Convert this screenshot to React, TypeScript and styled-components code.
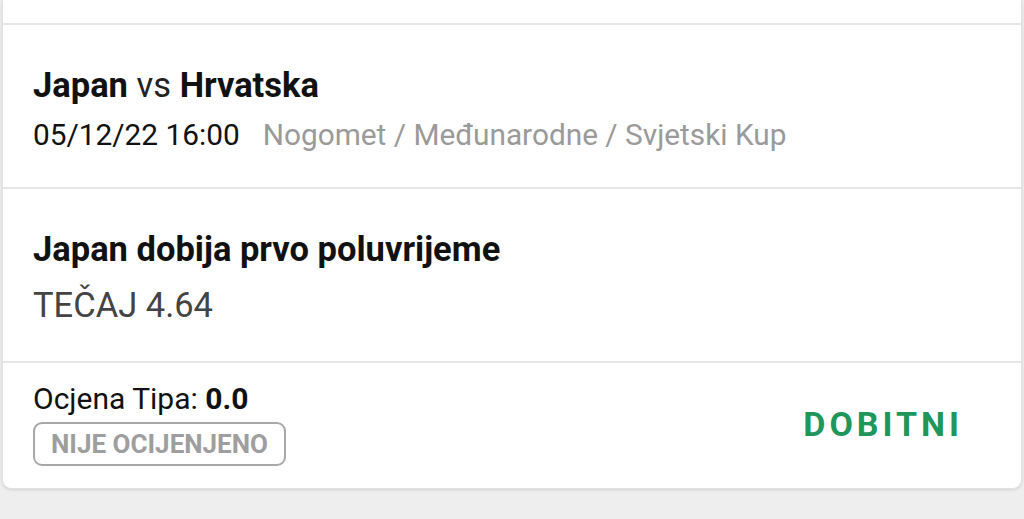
import React from "react";
import styled, { createGlobalStyle } from "styled-components";

const Global = createGlobalStyle`
  html, body { margin: 0; padding: 0; background: #eeeeee; }
  body { font-family: Roboto, "Noto Sans", sans-serif; width: 1024px; height: 519px; overflow: hidden; }
`;

const Page = styled.div`
  padding: 0 2px 0 2px;
`;

const Card = styled.div`
  background: #ffffff;
  border: 1px solid #e2e2e2;
  border-top: none;
  border-radius: 0 0 9px 9px;
  box-shadow: 0 1px 3px rgba(0, 0, 0, 0.12);
  display: flex;
  flex-direction: column;
`;

const Section = styled.div<{ $h: number; $pt?: number }>`
  height: ${(p) => p.$h}px;
  box-sizing: border-box;
  padding: ${(p) => p.$pt ?? 0}px 30px 0 30px;
  border-bottom: 2px solid #e6e6e6;
  display: flex;
  flex-direction: column;
`;

const Footer = styled.div`
  height: 125px;
  box-sizing: border-box;
  padding: 18px 58px 0 30px;
  display: flex;
  justify-content: space-between;
  align-items: flex-start;
`;

const Title = styled.div`
  font-size: 34.5px;
  line-height: 40px;
  color: #111;
  font-weight: 700;
  white-space: nowrap;
`;

const Light = styled.span`
  font-weight: 400;
  color: #222;
`;

const Meta = styled.div`
  margin-top: 12px;
  font-size: 29.8px;
  line-height: 36px;
  color: #111;
  display: flex;
  gap: 23px;
  white-space: nowrap;
`;

const Path = styled.span`
  color: #9a9a9a;
`;

const Odds = styled.div`
  margin-top: 16px;
  font-size: 34.5px;
  line-height: 40px;
  color: #444;
`;

const RatingCol = styled.div`
  display: flex;
  flex-direction: column;
  align-items: flex-start;
`;

const Rating = styled.div`
  font-size: 30px;
  line-height: 36px;
  color: #111;
  b { font-weight: 700; }
`;

const Badge = styled.div`
  margin-top: 5px;
  box-sizing: border-box;
  height: 44px;
  padding: 0 16px;
  border: 2px solid #a8a8a8;
  border-radius: 9px;
  color: #9e9e9e;
  font-size: 26px;
  font-weight: 700;
  display: flex;
  align-items: center;
  white-space: nowrap;
`;

const Status = styled.div`
  margin-top: 23px;
  font-size: 34px;
  font-weight: 700;
  letter-spacing: 4px;
  color: #21965a;
  line-height: 40px;
`;

export default function App() {
  return (
    <>
      <Global />
      <Page>
        <Card>
          <Section $h={25} />
          <Section $h={164} $pt={40}>
            <Title>
              Japan <Light>vs</Light> Hrvatska
            </Title>
            <Meta>
              <span>05/12/22 16:00</span>
              <Path>Nogomet / Međunarodne / Svjetski Kup</Path>
            </Meta>
          </Section>
          <Section $h={174} $pt={40}>
            <Title>Japan dobija prvo poluvrijeme</Title>
            <Odds>TEČAJ 4.64</Odds>
          </Section>
          <Footer>
            <RatingCol>
              <Rating>
                Ocjena Tipa: <b>0.0</b>
              </Rating>
              <Badge>NIJE OCIJENJENO</Badge>
            </RatingCol>
            <Status>DOBITNI</Status>
          </Footer>
        </Card>
      </Page>
    </>
  );
}
